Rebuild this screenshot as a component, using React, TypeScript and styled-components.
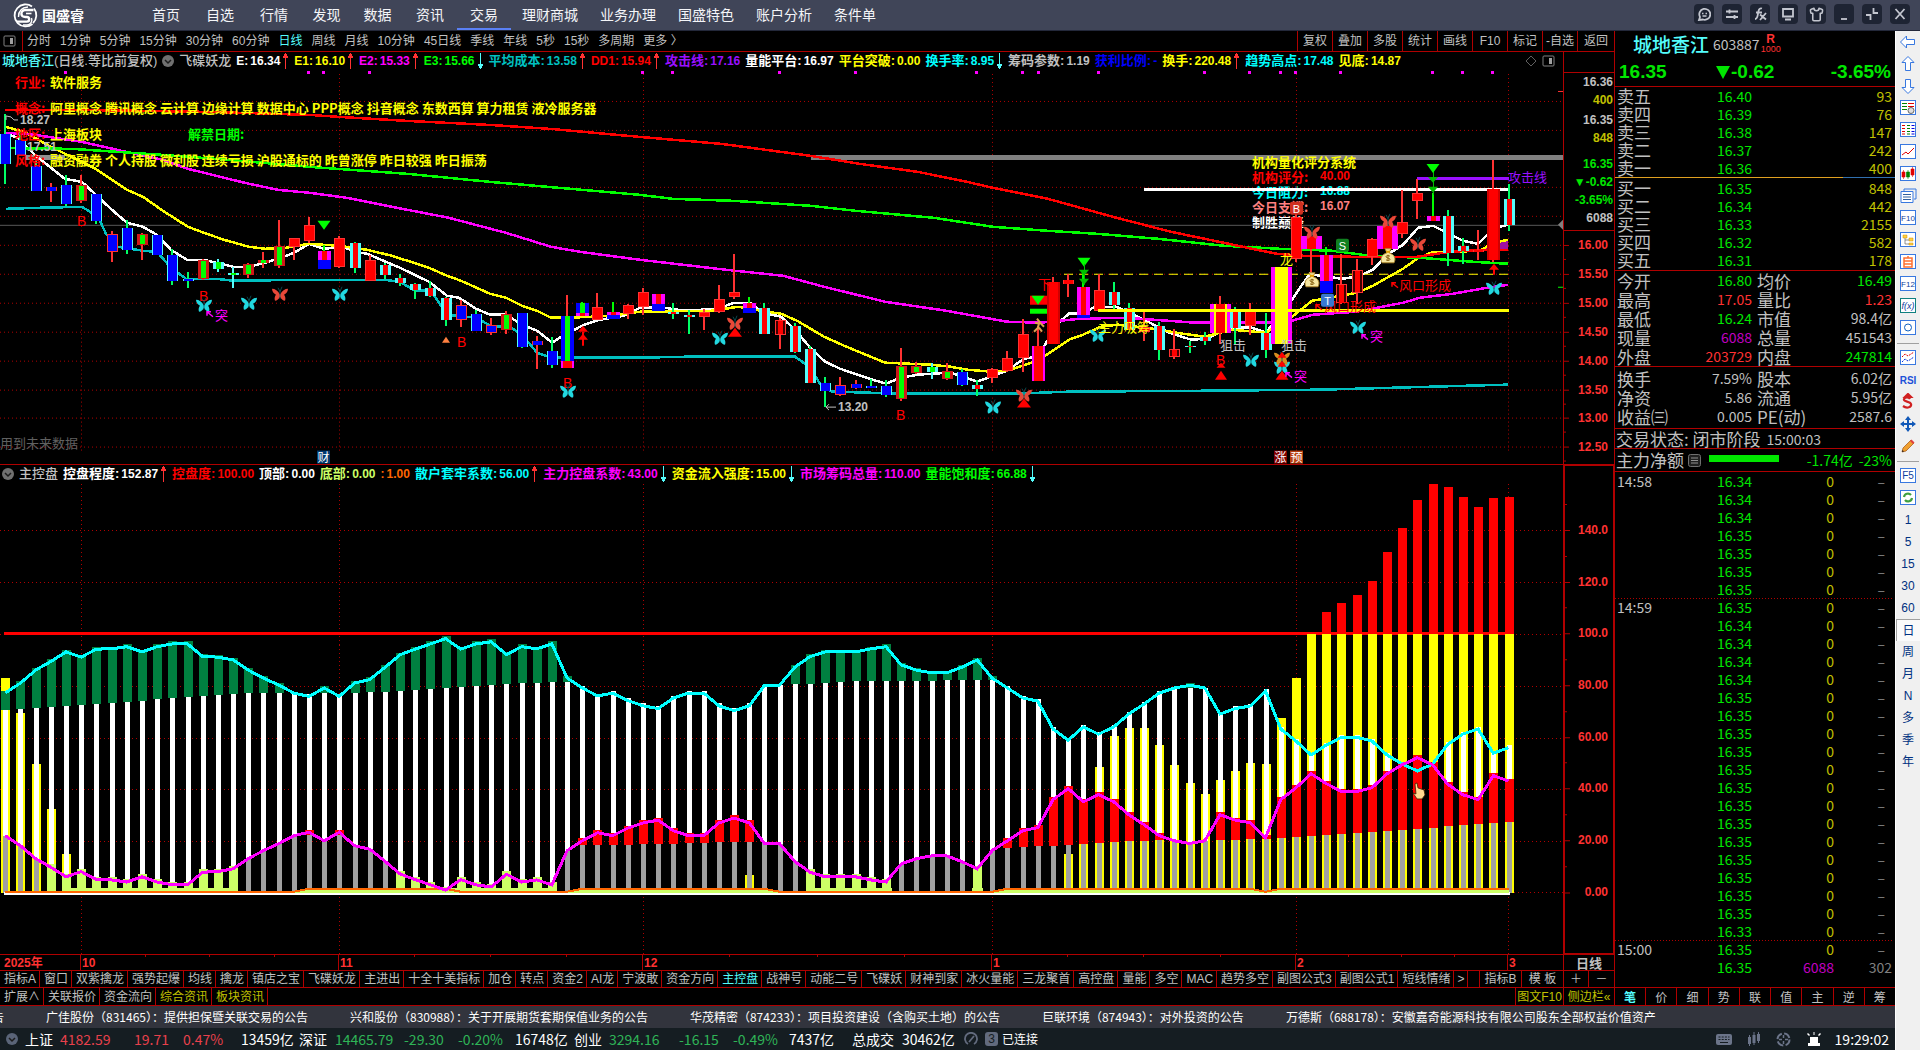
import React from "react";
import styled, { createGlobalStyle, css } from "styled-components";
import { Shirt } from "lucide-react";

const C = {
  line: "#b00000",
  red: "#ff3232",
  pure: "#ff0000",
  green: "#00e600",
  lime: "#00ff00",
  grey: "#c0c0c0",
  olive: "#c0c000",
  yellow: "#ffff00",
  cyan: "#00ffff",
  aqua: "#54fcfc",
  teal: "#00c0c0",
  magenta: "#ff00ff",
  violet: "#9a10ff",
  blue: "#0000ff",
};
const FONT = `"Liberation Sans", "Noto Sans CJK SC", sans-serif`;
const CJK = `"Noto Sans CJK SC", sans-serif`;

const Global = createGlobalStyle`
  * { box-sizing: border-box; }
  body { margin: 0; background: #000; overflow: hidden; }
  button { background: none; border: 0; padding: 0; margin: 0; color: inherit; font: inherit; white-space: nowrap; cursor: pointer; }
  a { color: inherit; text-decoration: none; }
  table { border-collapse: collapse; border-spacing: 0; }
  th, td { padding: 0; font-weight: 400; text-align: left; }
  svg { display: block; }
`;

const Page = styled.div`
  display: flex;
  flex-direction: column;
  height: 100vh;
  background: #000;
  color: ${C.grey};
  font: 12px/16px ${FONT};
  white-space: nowrap;
`;

/* ---------- header ---------- */
const Header = styled.header`
  display: flex;
  align-items: stretch;
  flex: none;
  height: 31px;
  background: #404558;
  border-bottom: 1px solid #23283a;
`;
const Brand = styled.div`
  display: flex;
  align-items: center;
  gap: 4px;
  width: 139px;
  padding-left: 13px;
  color: #fff;
  font: 700 14px/30px ${CJK};
`;
const Nav = styled.nav`
  display: flex;
  flex: 1;
`;
const NavLink = styled.a<{ $w: number; $on?: boolean }>`
  width: ${(p) => p.$w}px;
  text-align: center;
  color: #f4f5f8;
  font: 14px/28px ${CJK};
  border-bottom: 2px solid ${(p) => (p.$on ? "#5a80f5" : "transparent")};
`;
const Tools = styled.div`
  display: flex;
  align-items: center;
  gap: 8px;
  padding: 0 10px 2px 0;
`;
const Tool = styled.button`
  display: grid;
  place-items: center;
  width: 20px;
  height: 20px;
  border-radius: 4px;
  background: #1e2433;
  color: #c3c6cf;
`;

/* ---------- skeleton ---------- */
const Body = styled.div`
  display: flex;
  flex: 1;
  min-height: 0;
`;
const Left = styled.div`
  display: flex;
  flex-direction: column;
  flex: 1;
  min-width: 0;
`;
const Workspace = styled.div`
  display: flex;
  flex: 1;
  min-height: 0;
`;
const Charts = styled.main`
  display: flex;
  flex-direction: column;
  flex: 1;
  min-width: 0;
`;
const Toolbar = styled.div`
  display: flex;
  flex: none;
  height: 21px;
  border-bottom: 1px solid ${C.line};
`;
const PanelToggle = styled.button`
  display: grid;
  place-items: center;
  width: 23px;
  padding-right: 3px;
  border-right: 1px solid ${C.line};
`;
const Periods = styled.div`
  display: flex;
  flex: 1;
  gap: 9px;
  padding-left: 4px;
`;
const Period = styled.button<{ $on?: boolean }>`
  font: 12px/20px ${FONT};
  color: ${(p) => (p.$on ? C.aqua : C.grey)};
`;
const ToolTab = styled.button`
  width: 35px;
  border-left: 1px solid ${C.line};
  font: 12px/20px ${FONT};
  color: ${C.grey};
  &:last-child { width: 37px; }
`;

const Pane = styled.section<{ $grow: number; $ruled?: boolean }>`
  display: flex;
  flex: ${(p) => p.$grow} 1 0;
  min-height: 0;
  ${(p) => p.$ruled && css`border-top: 1px solid ${C.line};`}
`;
const PaneMain = styled.div`
  display: flex;
  flex-direction: column;
  flex: 1;
  min-width: 0;
`;
const Canvas = styled.div`
  position: relative;
  flex: 1;
  min-height: 0;
  overflow: hidden;
`;
const Plot = styled.svg`
  position: relative;
  z-index: 1;
  width: 100%;
  height: 100%;
`;
const AxisCol = styled.div<{ $heavy?: boolean }>`
  display: flex;
  flex-direction: column;
  flex: none;
  width: 51px;
  border-left: ${(p) => (p.$heavy ? 2 : 1)}px solid ${C.line};
  ${(p) => p.$heavy && css`
    border-top: 1px solid ${C.line};
    border-bottom: 1px solid ${C.line};
    border-right: 1px solid ${C.line};
  `}
`;
const AxisBlank = styled.div`
  height: 21px;
  border-bottom: 1px solid ${C.line};
`;
const AxisQuotes = styled.div`
  display: flex;
  flex-direction: column;
  height: 158px;
  padding-right: 1px;
  border-bottom: 1px solid ${C.line};
  text-align: right;
  font: 700 12px/18px ${FONT};
`;
const AxisQuote = styled.span<{ $c: string; $gap?: number }>`
  color: ${(p) => p.$c};
  margin-top: ${(p) => p.$gap || 0}px;
`;
const AxisPlot = styled.svg`
  flex: 1;
  min-height: 0;
  width: 100%;
`;

const Legend = styled.div`
  display: flex;
  align-items: center;
  flex: none;
  height: 18px;
  gap: 5px;
  padding: 0 8px 0 2px;
  font: 700 12px/18px ${FONT};
`;
const LegendItem = styled.span<{ $c: string }>`
  display: flex;
  align-items: center;
  gap: 2px;
  color: ${(p) => p.$c};
`;
const LegendKey = styled.span<{ $latin: boolean }>`
  font: 700 ${(p) => (p.$latin ? 12 : 13)}px/18px ${FONT};
`;
const LegendName = styled.span<{ $c: string }>`
  font: 500 13px/18px ${FONT};
  color: ${(p) => p.$c};
`;
const Push = styled.span`
  flex: 1;
`;
const IconButton = styled.button`
  display: grid;
  place-items: center;
`;
const Info = styled.div`
  position: absolute;
  z-index: 2;
  top: -1px;
  left: 15px;
  display: grid;
  grid-template-columns: 35px auto;
  font: 700 13px/26px ${CJK};
  color: ${C.yellow};
`;
const InfoKey = styled.span`
  color: ${C.pure};
`;
const Unlock = styled.span`
  margin-left: 86px;
  color: ${C.lime};
`;
const Score = styled.div`
  position: absolute;
  top: 84px;
  left: 80.1%;
  display: flex;
  flex-direction: column;
  font: 700 13px/15px ${CJK};
`;
const ScoreRow = styled.span<{ $c: string; $top?: boolean }>`
  display: flex;
  color: ${(p) => p.$c};
  ${(p) => p.$top && css`
    position: relative;
    z-index: 2;
  `}
  span { width: 68px; }
  b { font: 700 12px/15px ${FONT}; }
`;

const DateRow = styled.div`
  display: flex;
  flex: none;
  height: 16px;
  border-top: 1px solid ${C.line};
`;
const DatePlot = styled.svg`
  flex: 1;
  min-width: 0;
  height: 15px;
`;
const DateCell = styled.button`
  width: 51px;
  border-left: 1px solid ${C.line};
  font: 700 13px/15px ${CJK};
  color: ${C.grey};
`;
const TabRow = styled.div<{ $h: number }>`
  display: flex;
  flex: none;
  height: ${(p) => p.$h}px;
  border-top: 1px solid ${C.line};
`;
const Tab = styled.button<{ $c?: string; $w?: number; $edge?: boolean }>`
  flex: none;
  ${(p) => (p.$w ? css`width: ${p.$w}px;` : css`padding: 0 3px 0 4px;`)}
  border-right: 1px solid ${C.line};
  ${(p) => p.$edge && css`border-left: 1px solid ${C.line};`}
  font: 12px/16px ${FONT};
  color: ${(p) => p.$c || C.grey};
  &:last-child { border-right: 0; }
`;
const EndRule = styled.i`
  flex: none;
  height: 1px;
  background: ${C.line};
`;

/* ---------- quote panel ---------- */
const Quote = styled.aside`
  display: flex;
  flex-direction: column;
  flex: none;
  width: 281px;
  border-left: 1px solid ${C.line};
`;
const Title = styled.h1`
  display: flex;
  align-items: center;
  height: 26px;
  margin: 0;
  padding-left: 18px;
  gap: 4px;
  color: ${C.aqua};
  font: 500 19px/26px ${CJK};
`;
const Code = styled.span`
  color: ${C.grey};
  font: 14px/26px ${CJK};
`;
const Margin = styled.span`
  display: flex;
  flex-direction: column;
  align-items: center;
  margin-left: -3px;
  color: ${C.red};
  font: 9px/9px ${FONT};
  b { font: 700 12px/11px ${FONT}; }
`;
const PriceRow = styled.div`
  display: grid;
  grid-template-columns: 96px 1fr auto;
  height: 30px;
  padding: 0 4px;
  border-bottom: 1px solid ${C.line};
  color: ${C.green};
  font: 700 19px/30px ${FONT};
  span { display: flex; align-items: center; }
`;
const Grid = styled.table<{ $rule?: boolean; $row: number; $pad?: number }>`
  display: block;
  flex: none;
  width: 280px;
  padding: ${(p) => p.$pad ?? 0}px 0;
  ${(p) => p.$rule !== false && css`border-bottom: 1px solid ${C.line};`}
  font: 14px/${(p) => p.$row}px ${CJK};
  th, td { height: ${(p) => p.$row}px; }
  th { font: 17px/${(p) => p.$row}px ${CJK}; padding-left: 2px; }
`;
const Cell = styled.td<{ $c?: string; $w: number; $pad?: number }>`
  && { text-align: right; }
  width: ${(p) => p.$w}px;
  min-width: ${(p) => p.$w}px;
  padding-right: ${(p) => p.$pad || 0}px;
  color: ${(p) => p.$c || C.grey};
  overflow: hidden;
`;
const Key = styled.th<{ $w: number }>`
  width: ${(p) => p.$w}px;
  min-width: ${(p) => p.$w}px;
  max-width: ${(p) => p.$w}px;
  overflow: visible;
`;
const Shift = styled.span`
  padding-left: 3px;
`;
const Ratio = styled.div`
  display: grid;
  grid-template-columns: 228fr 52fr;
  height: 1px;
  flex: none;
  i { background: #e0a020; }
  i + i { background: #3070b0; }
`;
const StateRow = styled.div<{ $h: number }>`
  display: flex;
  align-items: center;
  flex: none;
  height: ${(p) => p.$h}px;
  padding: 0 3px 0 1px;
  border-bottom: 1px solid ${C.line};
  font: 17px/18px ${CJK};
`;
const Small = styled.span<{ $c?: string }>`
  font: 14px/18px ${CJK};
  color: ${(p) => p.$c || C.grey};
  margin-left: 6px;
`;
const NetBar = styled.i`
  width: 70px;
  height: 7px;
  margin: 0 auto 4px 8px;
  background: ${C.green};
`;
const Ticks = styled.table`
  display: block;
  flex: 1;
  width: 280px;
  font: 14px/18px ${CJK};
  th, td { height: 18px; }
  th { font: 14px/18px ${CJK}; padding-left: 2px; }
`;
const TickRow = styled.tr<{ $start?: boolean }>`
  ${(p) => p.$start && css`
    background: repeating-linear-gradient(90deg, ${C.line} 0 1px, transparent 1px 3px) 0 0 / 100% 1px no-repeat;
  `}
`;
const QuoteTabs = styled.div`
  display: flex;
  flex: none;
  height: 19px;
  border-top: 1px solid ${C.line};
  border-bottom: 1px solid ${C.line};
`;
const QuoteTab = styled.button<{ $on?: boolean }>`
  flex: 1;
  border-right: 1px solid ${C.line};
  font: ${(p) => (p.$on ? 700 : 400)} 12px/17px ${CJK};
  color: ${(p) => (p.$on ? C.aqua : C.grey)};
  &:last-child { border-right: 0; }
`;

/* ---------- foot ---------- */
const Ticker = styled.div`
  display: flex;
  flex: none;
  gap: 42px;
  height: 22px;
  overflow: hidden;
  background: #32343d;
  color: #fff;
  font: 12px/22px ${CJK};
`;
const TickerTail = styled.span`
  width: 4px;
  direction: rtl;
`;
const Status = styled.footer`
  display: flex;
  align-items: center;
  flex: none;
  height: 22px;
  padding: 0 4px 0 6px;
  background: #151d22;
  color: #fff;
  font: 14px/22px ${CJK};
`;
const Stat = styled.span<{ $c?: string; $w: number }>`
  width: ${(p) => p.$w}px;
  color: ${(p) => p.$c || "#fff"};
`;
const Badge = styled.span`
  width: 13px;
  margin: 0 4px 0 7px;
  border-radius: 3px;
  background: #626b7e;
  color: #151d22;
  text-align: center;
  font: 12px/14px ${FONT};
`;
const Linked = styled.span`
  flex: 1;
  font: 12px/22px ${CJK};
`;
const StatusIcons = styled.div`
  display: flex;
  align-items: center;
  gap: 16px;
  margin-right: 14px;
  color: #6b7489;
`;
const Clock = styled.time`
  padding-right: 2px;
`;

/* ---------- side strip ---------- */
const Strip = styled.nav`
  display: flex;
  flex-direction: column;
  flex: none;
  width: 25px;
  border-left: 1px solid #fff;
  background: #f0f0f0;
`;
const StripButton = styled.button<{ $on?: boolean }>`
  display: grid;
  place-items: center;
  height: 22px;
  color: #003080;
  font: 12px/20px ${FONT};
  ${(p) => p.$on && css`
    background: #fafafa;
    border-left: 1px solid #a0a0a0;
    border-top: 1px solid #a0a0a0;
  `}
`;
const StripRule = styled.i`
  height: 1px;
  margin: 4px 1px 3px;
  background: #a0a0a0;
`;

/* ---------- data ---------- */
const nav: [string, number][] = [
  ["首页", 54], ["自选", 54], ["行情", 54], ["发现", 51], ["数据", 51], ["资讯", 54], ["交易", 54],
  ["理财商城", 78], ["业务办理", 78], ["国盛特色", 78], ["账户分析", 78], ["条件单", 64],
];
const periods = ["分时", "1分钟", "5分钟", "15分钟", "30分钟", "60分钟", "日线", "周线", "月线", "10分钟", "45日线", "季线", "年线", "5秒", "15秒", "多周期", "更多 〉"];
const toolTabs = ["复权", "叠加", "多股", "统计", "画线", "F10", "标记", "-自选", "返回"];

type Leg = [string, string, string, ("up" | "down")?];
const mainLegend: Leg[] = [
  ["E:", "16.34", "#fff", "up"], ["E1:", "16.10", C.yellow, "up"], ["E2:", "15.33", C.magenta, "up"],
  ["E3:", "15.66", C.lime, "down"], ["平均成本:", "13.58", C.teal, "up"], ["DD1:", "15.94", C.pure, "up"],
  ["攻击线:", "17.16", C.violet], ["量能平台:", "16.97", "#fff"], ["平台突破:", "0.00", C.yellow],
  ["换手率:", "8.95", C.cyan, "down"], ["筹码参数:", "1.19", C.grey], ["获利比例:", "-", C.blue],
  ["换手:", "220.48", C.yellow, "up"], ["趋势高点:", "17.48", C.cyan], ["见底:", "14.87", C.yellow],
];
const subLegend: Leg[] = [
  ["控盘程度:", "152.87", "#fff", "up"], ["控盘度:", "100.00", C.pure], ["顶部:", "0.00", "#fff"],
  ["底部:", "0.00", "#ccff66"], [":", "1.00", "#ff6600"], ["散户套牢系数:", "56.00", C.cyan, "up"],
  ["主力控盘系数:", "43.00", C.magenta, "down"], ["资金流入强度:", "15.00", C.yellow, "down"],
  ["市场筹码总量:", "110.00", C.magenta], ["量能饱和度:", "66.88", C.lime, "down"],
];
const indicatorTabs = ["指标A", "窗口", "双紫擒龙", "强势起爆", "均线", "擒龙", "镇店之宝", "飞碟妖龙", "主进出", "十全十美指标", "加仓", "转点", "资金2", "AI龙", "宁波敢", "资金方向", "主控盘", "战神号", "动能二号", "飞碟妖", "财神到家", "冰火量能", "三龙聚首", "高控盘", "量能", "多空", "MAC", "趋势多空", "副图公式3", "副图公式1", "短线情绪"];
const asks = [["卖五", "16.40", "93"], ["卖四", "16.39", "76"], ["卖三", "16.38", "147"], ["卖二", "16.37", "242"], ["卖一", "16.36", "400"]];
const bids = [["买一", "16.35", "848"], ["买二", "16.34", "442"], ["买三", "16.33", "2155"], ["买四", "16.32", "582"], ["买五", "16.31", "178"]];
const facts = [
  ["今开", "16.80", C.green, "均价", "16.49", C.green],
  ["最高", "17.05", C.red, "量比", "1.23", C.red],
  ["最低", "16.24", C.green, "市值", "98.4亿", C.grey],
  ["现量", "6088", "#c000c0", "总量", "451543", C.grey],
  ["外盘", "203729", C.red, "内盘", "247814", C.green],
];
const facts2 = [
  ["换手", "7.59%", C.grey, "股本", "6.02亿", C.grey],
  ["净资", "5.86", C.grey, "流通", "5.95亿", C.grey],
  ["收益㈢", "0.005", C.grey, "PE(动)", "2587.6", C.grey],
];
const tickPrices = [34, 34, 34, 35, 35, 35, 35, 35, 34, 34, 34, 34, ...Array(13).fill(35), 33, 35, 35];
const tickTimes: Record<number, string> = { 0: "14:58", 7: "14:59", 26: "15:00" };
const news = [
  "广佳股份（831465）：提供担保暨关联交易的公告",
  "兴和股份（830988）：关于开展期货套期保值业务的公告",
  "华茂精密（874233）：项目投资建设（含购买土地）的公告",
  "巨联环境（874943）：对外投资的公告",
  "万德斯（688178）：安徽嘉奇能源科技有限公司股东全部权益价值资产",
];
const up = "#e8414c";
const dn = "#2fb457";
const indices: [string, number, string?][] = [
  ["上证", 35], ["4182.59", 74, up], ["19.71", 49, up], ["0.47%", 58, up], ["13459亿", 58],
  ["深证", 36], ["14465.79", 69, dn], ["-29.30", 54, dn], ["-0.20%", 57, dn], ["16748亿", 59],
  ["创业", 35], ["3294.16", 70, dn], ["-16.15", 54, dn], ["-0.49%", 56, dn], ["7437亿", 63],
  ["总成交", 50], ["30462亿", 62],
];

/* ---------- chart series ---------- */
const barX = (i: number) => 5.3 + 15.184 * i;
const months: [number, string][] = [[81, "10"], [339, "11"], [643, "12"], [992, "1"], [1296, "2"], [1508, "3"]];

const retail = [
  77.2, 81.1, 86.1, 89.4, 93.1, 91.1, 94.2, 94.3, 95.1, 93.1, 95.1, 96.2, 96.2, 91.3, 91.1, 90, 86.1, 83, 80.3, 77.2,
  75.9, 79.2, 75.9, 81.1, 82.4, 87.1, 92, 94.2, 96.2, 98.2, 94.2, 96.2, 97, 92.1, 95.1, 94.3, 96.2, 83, 79.2, 76.1,
  77.2, 74.3, 72.3, 71.2, 75.3, 77.2, 77.2, 72.3, 70.4, 72.3, 80.2, 80.3, 87.2, 91.3, 93.1, 93.1, 93.1, 94.3, 95.1, 88.1,
  86.1, 85, 85, 87.2, 90, 82.9, 79.2, 75.3, 74.1, 63.3, 59, 64.1, 61.3, 64.1, 69.1, 73, 77.2, 79.2, 80.2, 79.2,
  69.1, 71.2, 72.2, 78, 63.3, 58.7, 53.3, 57.1, 60.1, 60.1, 58.7, 53.3, 49.8, 47.1, 49.8, 57.4, 61.4, 63.3, 54, 56.1,
];
const control: Record<number, number> = {
  0: 83.2, 1: 69.6, 2: 49.8, 3: 32.4, 4: 15, 49: 6.8, 70: 15, 71: 33, 72: 48.7, 73: 60.7, 74: 63.8, 75: 63.8, 76: 57.2,
  77: 49.5, 78: 42.5, 79: 38.2, 80: 43.6, 81: 47.1, 82: 50.2, 83: 49.8, 84: 67.6, 85: 83, 86: 100, 87: 108.3, 88: 111.8,
  89: 115, 90: 120.4, 91: 131.5, 92: 140.9, 93: 151.8, 94: 158, 95: 156.8, 96: 152.9, 97: 149, 98: 152.5, 99: 152.9,
};
const thresholdPts = [[0, 70.9], [7, 73.6], [15, 77], [17, 77.4], [23, 77.5], [25, 77.9], [29, 79.2], [32, 80.5], [36, 81.6], [38, 81.3], [43, 80.9], [48, 80], [50, 80.2], [53, 81], [56, 82], [66, 82.4], [70, 81.2], [73, 80], [76, 79.5], [83, 79], [85, 78.3], [91, 76], [95, 74], [99, 72.4]];
const threshold = (i: number) => {
  const k = Math.max(1, thresholdPts.findIndex((p) => p[0] >= i));
  const [x0, y0] = thresholdPts[k - 1];
  const [x1, y1] = thresholdPts[k];
  return y0 + ((y1 - y0) * (i - x0)) / (x1 - x0);
};
const lowBase = (i: number) => i < 20 || (i > 29 && i < 38) || (i > 50 && i < 66) || i === 83;

/* kind, index, high, low, body top, body bottom */
type Candle = [string, number, number, number, number, number];
const candles: Candle[] = [
  ["b", 0, 114, 184, 134, 164], ["b", 1, 132, 155, 140, 155], ["b", 2, 160, 191, 166, 191], ["rb", 3, 183, 202, 187, 191],
  ["b", 4, 175, 206, 185, 204], ["rg", 5, 175, 203, 185, 201], ["b", 6, 194, 224, 194, 221], ["rb", 7, 231, 262, 234, 252],
  ["b", 8, 220, 254, 228, 250], ["rg", 9, 233, 260, 234, 245], ["b", 10, 235, 255, 235, 255], ["b", 11, 249, 285, 255, 281],
  ["b", 12, 272, 288, 279, 281], ["rg", 13, 259, 280, 260, 279], ["cg", 14, 259, 272, 262, 269], ["cg", 15, 267, 288, 273, 275],
  ["rg", 16, 263, 278, 264, 275], ["rg", 17, 252, 268, 260, 263], ["rg", 18, 220, 268, 246, 266], ["r", 19, 238, 260, 238, 247],
  ["r", 20, 217, 243, 225, 241], ["m", 21, 245, 269, 251, 260], ["mb", 21, 260, 268, 260, 269], ["r", 22, 236, 268, 238, 267],
  ["c", 23, 242, 273, 243, 268], ["r", 24, 255, 281, 260, 281], ["c", 25, 263, 279, 265, 275], ["c", 26, 274, 286, 278, 283],
  ["c", 27, 283, 299, 284, 290], ["c", 28, 281, 297, 288, 296], ["c", 29, 297, 326, 298, 320], ["rb", 30, 300, 327, 305, 320],
  ["b", 31, 310, 331, 314, 331], ["rb", 32, 318, 335, 325, 333], ["rg", 33, 311, 334, 314, 330], ["b", 34, 313, 348, 313, 347],
  ["rb", 35, 336, 369, 341, 345], ["b", 36, 337, 368, 351, 365], ["B", 37, 295, 361, 316, 361], ["M", 37, 361, 368, 361, 368],
  ["bg", 38, 302, 313, 303, 313], ["m", 38, 313, 316, 313, 316], ["r", 39, 293, 320, 307, 320], ["m", 40, 302, 315, 312, 315],
  ["mb", 40, 315, 319, 315, 319], ["r", 41, 304, 319, 305, 314], ["r", 42, 288, 315, 292, 307], ["m", 43, 294, 304, 294, 304],
  ["mb", 43, 304, 311, 304, 311], ["c", 44, 303, 319, 312, 314], ["c", 45, 310, 334, 315, 317], ["r", 46, 309, 330, 312, 317],
  ["r", 47, 285, 313, 299, 312], ["r", 48, 254, 299, 292, 297], ["m", 49, 297, 308, 303, 308], ["mb", 49, 308, 313, 308, 313],
  ["c", 50, 303, 334, 308, 334], ["d", 51, 318, 349, 320, 335], ["c", 52, 323, 353, 326, 352], ["c", 53, 346, 383, 349, 383],
  ["b", 54, 377, 407, 383, 391], ["rb", 55, 377, 396, 385, 395], ["rb", 56, 380, 389, 384, 388], ["b", 57, 379, 388, 386, 388],
  ["b", 58, 380, 397, 386, 395], ["rg", 59, 348, 401, 366, 399], ["rg", 60, 362, 374, 366, 373], ["cg", 61, 363, 379, 367, 372],
  ["rg", 62, 363, 380, 371, 379], ["b", 63, 369, 386, 372, 385], ["c", 64, 380, 396, 385, 389], ["r", 65, 368, 383, 369, 378],
  ["r", 66, 351, 372, 358, 371], ["r", 67, 319, 372, 334, 358], ["M", 68, 326, 381, 346, 381], ["R", 69, 277, 344, 282, 344],
  ["r", 70, 274, 297, 280, 284], ["m", 71, 270, 315, 287, 315], ["mb", 71, 315, 318, 315, 318], ["r", 72, 274, 311, 290, 311],
  ["c", 73, 282, 309, 292, 305], ["c", 74, 303, 330, 308, 330], ["r", 75, 312, 341, 327, 332], ["c", 76, 322, 360, 326, 350],
  ["d", 77, 329, 359, 349, 357], ["c", 78, 341, 353, 346, 347], ["c", 79, 332, 345, 337, 341], ["W", 80, 296, 344, 304, 333],
  ["c", 81, 307, 344, 311, 328], ["r", 82, 303, 335, 311, 326], ["c", 83, 313, 358, 333, 350], ["Y", 84, 267, 344, 267, 344],
  ["r", 85, 210, 262, 217, 259], ["V", 86, 232, 273, 236, 249], ["m", 87, 247, 281, 255, 281], ["mb", 87, 281, 293, 281, 293],
  ["d", 88, 254, 304, 284, 303], ["d", 89, 259, 304, 270, 293], ["r", 90, 238, 265, 239, 257], ["V", 91, 222, 252, 226, 249],
  ["r", 92, 190, 238, 222, 234], ["r", 93, 179, 219, 193, 201], ["m", 94, 193, 221, 216, 221], ["c", 95, 210, 266, 216, 253],
  ["c", 96, 238, 264, 246, 251], ["r", 97, 230, 260, 250, 252], ["R", 98, 160, 262, 189, 260], ["c", 99, 184, 231, 199, 225],
];
/* outer width, outer colour, inner width, inner colour, wick */
const kinds: Record<string, [number, string, number, string, string]> = {
  b: [11, C.aqua, 9, C.blue, "#00ff66"], rb: [11, C.red, 9, C.blue, C.red], rg: [11, "#d01818", 5, C.lime, C.red],
  bg: [13, C.blue, 5, C.lime, C.lime], cg: [11, C.aqua, 5, C.lime, C.aqua], r: [11, C.red, 9, C.pure, C.red],
  R: [13, "#d00000", 9, C.pure, C.red], d: [11, C.red, 5, C.pure, C.red], c: [11, C.aqua, 5, C.pure, "#00ff66"],
  m: [13, C.magenta, 5, C.pure, C.lime], mb: [13, C.blue, 3, C.blue, C.lime], B: [13, C.blue, 5, C.lime, C.red],
  M: [13, C.magenta, 9, C.pure, C.red], W: [21, C.magenta, 13, C.yellow, C.red], Y: [21, C.magenta, 13, C.yellow, C.yellow],
  V: [21, C.magenta, 9, C.pure, C.red],
};

const lines = {
  red: "5,110 82,110 212,112 310,115 340,117 408,121 490,125 551,129 640,137 722,144 811,156 860,164 918,172 967,182 993,188 1048,199 1113,217 1171,232 1224,243 1252,249 1277,254 1303,256 1353,257 1417,257 1450,252 1487,250 1508,250",
  green: "0,148 73,149 163,155 229,160 310,167 408,174 490,182 571,189 640,195 673,199 734,201 811,206 856,211 934,218 993,227 1048,231 1097,234 1158,239 1224,246 1280,249 1333,251 1370,256 1420,258 1473,262 1508,264",
  magenta: "6,133 29,134 82,142 122,151 163,160 188,169 245,183 278,190 310,193 347,198 392,207 449,218 506,233 551,247 580,252 640,260 726,270 783,276 824,287 885,302 946,311 1007,322 1040,323 1081,319 1126,318 1195,323 1265,323 1292,321 1313,315 1357,312 1377,308 1403,303 1420,298 1453,294 1487,288 1508,285",
  yellow: "6,127 24,132 53,148 94,168 127,190 143,197 163,211 188,227 204,233 224,240 249,247 265,249 286,248 309,244 339,246 367,250 392,256 429,268 447,276 461,281 490,294 506,298 522,306 537,311 551,318 571,318 612,316 640,312 713,311 738,307 767,312 781,314 797,321 824,337 844,346 885,363 930,365 950,367 967,370 991,372 1007,371 1032,363 1044,357 1069,340 1083,335 1101,327 1118,325 1146,328 1183,334 1205,337 1232,330 1266,333 1292,317 1312,301 1330,298 1357,293 1373,286 1387,278 1403,269 1417,259 1433,252 1453,252 1480,251 1493,243 1508,240",
  white: "6,134 18,138 35,155 51,168 65,179 82,182 98,197 112,210 127,223 143,227 157,235 171,250 187,260 204,260 233,267 249,267 265,263 278,259 294,253 309,244 324,249 343,247 355,252 367,254 400,268 429,282 447,296 459,298 476,309 490,315 506,315 522,325 537,331 552,343 563,336 584,325 600,320 624,316 640,308 664,308 685,311 718,309 734,303 752,304 762,313 781,317 795,330 811,349 825,362 840,369 869,379 886,384 901,378 918,375 950,373 962,377 977,382 991,377 1007,371 1024,359 1038,357 1048,340 1056,325 1069,314 1083,314 1093,308 1116,307 1130,313 1146,321 1167,332 1191,340 1207,339 1220,332 1232,328 1252,328 1266,333 1292,300 1302,285 1310,274 1320,276 1342,279 1357,277 1373,270 1387,255 1403,245 1418,228 1433,226 1447,233 1463,241 1478,244 1487,235 1500,227 1508,225",
  teal: "6,209 37,208 82,207 98,217 106,234 118,247 143,251 157,252 171,268 186,279 216,279 233,281 309,280 384,280 400,282 415,291 431,291 447,315 476,318 492,327 510,327 522,335 537,353 551,358 640,358 689,357 795,357 809,367 822,387 832,392 901,394 1016,394 1069,392 1220,391 1323,390 1508,385",
};

/* ---------- drawings ---------- */
const Arrow = ({ dir }: { dir: "up" | "down" }) => (
  <svg width="7" height="16" viewBox="0 0 7 16" shapeRendering="crispEdges" aria-hidden>
    {dir === "up" ? <path d="M3 0h1v1h1v2h1v2H4v11H3V5H1V3h1V1h1z" fill={C.red} /> : <path d="M3 0h1v11h2v2H5v2H4v1H3v-1H2v-2H1v-2h2z" fill={C.aqua} />}
  </svg>
);
const Drop = ({ bg = "#707070" }: { bg?: string }) => (
  <svg width="12" height="14" viewBox="0 0 12 14" aria-hidden>
    <circle cx="6" cy="7" r="6" fill={bg} />
    <path d="M3 6l3 3 3-3" fill="none" stroke="#1c1c1c" strokeWidth="1.5" />
  </svg>
);
const PanelIcon = () => (
  <svg width="13" height="12" viewBox="0 0 13 12" aria-hidden>
    <rect x="1" y="1" width="11" height="10" rx="1" fill="none" stroke="#808080" />
    <rect x="7" y="3" width="3" height="6" fill="#a0a0a0" />
  </svg>
);
const Logo = () => (
  <svg width="25" height="25" viewBox="0 0 25 25" aria-hidden>
    <g fill="none" stroke="#fff" strokeWidth="2.400">
      <path d="M19 3.500A11 11 0 1 0 19.500 21" strokeWidth="1.800" />
      <path d="M21 5.500A10.800 10.800 0 0 1 20 20" strokeWidth="1.800" />
      <path d="M20.500 7H12a3.800 3.800 0 0 0-3.600 4c.2 2.400 2 3 4 3h1.500a2.300 2.300 0 0 1 0 4.600H4" />
      <path d="M18.500 10.500h-5.500" strokeWidth="1.600" />
      <path d="M5.500 14C5.500 8 9 4.500 15 4" strokeWidth="1.400" />
      <path d="M10 22h4a5 5 0 0 0 4.500-7" strokeWidth="1.400" />
    </g>
  </svg>
);
const Butterfly = ({ x, y, c = "#22d8e0" }: { x: number; y: number; c?: string }) => (
  <g transform={`translate(${x} ${y})`} fill={c}>
    <path d="M0 1C-2-3-5-5-8-5c0 3 2 5 4 6-1 1-2 4-1 6 2 0 4-2 5-4 1 2 3 4 5 4 1-2 0-5-1-6 2-1 4-3 4-6-3 0-6 2-8 6z" />
    <path d="M0 5V-2L-2-6M0-2l2-5" stroke="#0b5a60" fill="none" strokeWidth=".8" />
  </g>
);
const Candlestick = ({ c }: { c: Candle }) => {
  const [ow, oc, iw, ic, wick] = kinds[c[0]];
  const x = Math.round(barX(c[1]));
  const h = c[5] - c[4];
  const outlined = ["r", "rb", "rg", "d"].includes(c[0]);
  const inset = outlined && h > 4 ? 1 : 0;
  return (
    <g>
      <rect x={x - 1} y={c[2]} width={2} height={c[3] - c[2]} fill={wick} />
      <rect x={x - (ow - 1) / 2} y={c[4]} width={ow} height={h} fill={oc} />
      {c[0] === "d" && <rect x={x - 4} y={c[4] + 1} width={9} height={h - 2} fill="#400000" />}
      <rect x={x - (iw - 1) / 2} y={c[4] + inset} width={iw} height={h - inset * 2} fill={ic} />
      {c[0] === "W" && <rect x={x - 4} y={c[4]} width={9} height={h} fill={C.pure} />}
    </g>
  );
};
const Tri = ({ x, y, w = 14, h = 9, c = C.pure, down }: { x: number; y: number; w?: number; h?: number; c?: string; down?: boolean }) => (
  <path d={down ? `M${x - w / 2} ${y}h${w}l${-w / 2} ${h}z` : `M${x - w / 2} ${y + h}h${w}l${-w / 2} ${-h}z`} fill={c} />
);
const Mark = ({ x, y, t, c, s = 13, w = 400 }: { x: number; y: number; t: string; c: string; s?: number; w?: number }) => (
  <text x={x} y={y + 5} fill={c} fontSize={s} fontWeight={w} fontFamily={FONT}>{t}</text>
);
const Chip = ({ x, y, t, bg, s = 12 }: { x: number; y: number; t: string; bg: string; s?: number }) => (
  <g>
    <rect x={x} y={y} width="13" height="13" rx={s < 12 ? 2 : 0} fill={bg} />
    <text x={x + 6.5} y={y + 11} fill="#fff" fontSize={s} textAnchor="middle" fontFamily={FONT}>{t}</text>
  </g>
);
const Burst = ({ x, y, c = C.magenta }: { x: number; y: number; c?: string }) => (
  <path d={`M${x} ${y}l-6 -5m0 4v-4h4`} stroke={c} strokeWidth="1.500" fill="none" />
);
const Bag = ({ x, y }: { x: number; y: number }) => (
  <g transform={`translate(${x} ${y})`}>
    <path d="M-3-7h6L1-3c6 2 7 6 5 10h-12c-2-4-1-8 5-10z" fill="#f6e7a0" stroke="#b08a30" />
    <path d="M-2-4h4" stroke="#e0a000" strokeWidth="2" />
    <path d="M2 .500c-1-1-4-1-4 .5s4 1 4 2.500-3 1.500-4 .5M0-1v6" fill="none" stroke="#7a5200" strokeWidth=".9" />
  </g>
);

const gridY = [101, 130, 187, 216, 245, 274, 303, 332, 361, 390, 418, 447];
const dots = { stroke: C.line, strokeDasharray: "1 3", fill: "none" };

const MainPlot = () => (
  <Plot viewBox="0 70 1563 394" preserveAspectRatio="none" shapeRendering="crispEdges" role="img" aria-label="日线K线图">
    {gridY.map((y) => <path key={y} d={`M0 ${y}.5H1563`} {...dots} />)}
    {months.map(([x]) => <path key={x} d={`M${x}.5 74V451`} {...dots} />)}
    <path d="M0 225.500H180M1146 225.500H1563" stroke="#585858" />
    <rect x="811" y="155" width="752" height="5" fill="#808080" />
    <rect x="25" y="155" width="40" height="5" fill="#909090" />
    {[65, 308, 323, 369, 642, 672, 779, 855, 976, 1022, 1038, 1098, 1204, 1249, 1280, 1295, 1340, 1432, 1462, 1492].map((x) => (
      <rect key={x} x={x - 1} y="71" width="3" height="3" fill={C.magenta} />
    ))}
    <path d="M1475 252L1493 243 1508 240V250z" fill="#a010a0" />
    <g fill="none" strokeWidth="2.5">
      <polyline points={lines.teal} stroke={C.teal} />
      <polyline points={lines.white} stroke="#fff" />
      <polyline points={lines.yellow} stroke={C.yellow} />
      <polyline points={lines.magenta} stroke={C.magenta} />
      <polyline points={lines.green} stroke={C.lime} />
      <polyline points={lines.red} stroke={C.pure} />
    </g>
    <path d="M1064 274.500H1513" stroke={C.yellow} strokeDasharray="9 6" />
    <path d="M1144 189.500H1509" stroke="#fff" strokeWidth="3" />
    <path d="M1417 178.500H1509" stroke={C.violet} strokeWidth="3" />
    {candles.map((c, k) => <Candlestick key={k} c={c} />)}
    <path d="M1098 310.500H1509" stroke={C.yellow} strokeWidth="3" />
    <g shapeRendering="auto">
      <Mark x={20} y={119} t="18.27" c={C.grey} s={12} w={700} />
      <path d="M6 116l5 1 3 3h4M6 116v4" stroke={C.grey} fill="none" />
      <Mark x={27} y={146} t="17.51" c={C.grey} s={12} w={700} />
      <Mark x={838} y={406} t="13.20" c={C.grey} s={12} w={700} />
      <path d="M836 407.500H826l3-3M826 407.500l3 3" stroke={C.grey} fill="none" />
      {[[82, 221], [204, 296], [462, 342], [568, 383], [901, 415], [1221, 360]].map(([x, y]) => (
        <Mark key={x} x={x - 5} y={y} t="B" c={C.pure} s={14} />
      ))}
      {[[204, 305], [249, 303], [340, 294], [568, 391], [720, 338], [993, 407], [1098, 335], [1251, 360], [1282, 367], [1358, 327], [1494, 288]].map(([x, y]) => (
        <Butterfly key={x} x={x} y={y} />
      ))}
      {[[280, 294], [735, 323], [1024, 395], [1312, 232], [1388, 221], [1418, 244]].map(([x, y]) => (
        <Butterfly key={x} x={x} y={y} c="#e84838" />
      ))}
      <Butterfly x={1282} y={358} c="#d89020" />
      <Tri x={735} y={328} /><Tri x={1024} y={399} /><Tri x={1221} y={371} w={12} /><Tri x={1282} y={371} w={13} />
      <Tri x={1282} y={352} w={9} h={6} /><Tri x={1282} y={361} w={9} h={6} /><Tri x={1221} y={363} w={9} h={5} />
      <Tri x={583} y={326} w={10} h={6} /><Tri x={583} y={334} w={10} h={6} /><path d="M583 332V346" stroke={C.pure} strokeWidth="2" />
      <Tri x={1494} y={264} w={10} h={6} /><path d="M1494 268V275" stroke={C.pure} strokeWidth="2" />
      <Tri x={446} y={337} w={8} h={6} c="#ff8040" />
      <Tri x={324} y={221} w={13} h={9} c={C.lime} down />
      <rect x="1030" y="296" width="17" height="9" fill={C.pure} />
      <Tri x={1038} y={296} w={13} h={9} c={C.lime} down />
      <rect x="1030" y="309" width="17" height="5" fill={C.lime} />
      <Tri x={1084} y={258} w={13} h={9} c={C.lime} down /><Tri x={1084} y={270} w={10} h={6} c="#00c000" down /><Tri x={1084} y={279} w={10} h={6} c="#00c000" down />
      <path d="M1084.500 264V285M1433.500 170V195" stroke="#00c000" />
      <Tri x={1433} y={164} w={13} h={9} c={C.lime} down /><Tri x={1433} y={177} w={10} h={6} c="#00c000" down /><Tri x={1433} y={187} w={10} h={6} c="#00c000" down />
      <path d="M1037 319l3 4 4 4m-5-4l-1 5-4 4m5-4l3 4m-7-9l5 1" stroke="#e0a050" strokeWidth="2" fill="none" />
      <Mark x={1038} y={284} t="下" c={C.pure} />
      <Mark x={1098} y={327} t="主力吸筹" c={C.yellow} />
      <Mark x={1220} y={345} t="狙击" c={C.grey} /><Mark x={1281} y={345} t="狙击" c={C.grey} />
      <Mark x={1280} y={259} t="龙" c={C.yellow} />
      <Mark x={215} y={315} t="突" c={C.magenta} /><Burst x={213} y={317} />
      <Mark x={1370} y={336} t="突" c={C.magenta} /><Burst x={1368} y={340} />
      <Mark x={1294} y={376} t="突" c={C.magenta} /><Burst x={1292} y={378} />
      <Mark x={1399} y={285} t="风口形成" c={C.pure} /><Burst x={1398} y={288} c={C.pure} />
      <Mark x={1324} y={306} t="风口形成" c={C.pure} /><Burst x={1322} y={310} c={C.pure} />
      <Mark x={1508} y={177} t="攻击线" c={C.violet} />
      <Bag x={1312} y={280} /><Bag x={1388} y={256} />
      <Chip x={1290} y={202} t="B" bg="#d03020" s={11} /><Chip x={1336} y={239} t="S" bg="#108020" s={11} /><Chip x={1321} y={294} t="T" bg="#3878d0" s={11} />
      <Chip x={317} y={451} t="财" bg="#003a70" /><Chip x={1274} y={451} t="涨" bg="#800000" /><Chip x={1290} y={451} t="预" bg="#b84010" />
      <Mark x={0} y={443} t="用到未来数据" c="#606060" />
      <path d="M1563 220v10l-5-5z" fill="#808080" />
    </g>
    <path d="M1558 91.500H1563" stroke={C.red} /><path d="M1558 287.500H1563" stroke={C.lime} />
  </Plot>
);

const V = (v: number) => 891.6 - v * 2.58;
const Bar = ({ i, a, b, w, c }: { i: number; a: number; b: number; w: number; c: string }) => (
  <rect x={Math.round(barX(i)) - (w - 1) / 2} y={Math.round(V(b))} width={w} height={Math.max(0, Math.round(V(a)) - Math.round(V(b)))} fill={c} />
);
const ControlPlot = () => {
  const base = retail.map((_, i) => `${barX(i).toFixed(1)},${lowBase(i) ? 890.5 : 887.5}`).join(" ");
  return (
    <Plot viewBox="0 483 1563 470" preserveAspectRatio="none" shapeRendering="crispEdges" role="img" aria-label="主控盘指标图">
      {[140, 120, 100, 80, 60, 40, 20].map((v) => <path key={v} d={`M0 ${Math.round(V(v))}.5H1563`} {...dots} />)}
      <path d="M1510 891.500H1563" {...dots} />
      {months.map(([x]) => <path key={x} d={`M${x}.5 484V953`} {...dots} />)}
      <path d="M4 633.500H1509" stroke={C.pure} strokeWidth="3" />
      {retail.map((r, i) => {
        const m = 99.3 - r;
        const t = threshold(i);
        const cap = 99.7 - t;
        const k = control[i] || 0;
        return (
          <g key={i}>
            {k > 0 && <Bar i={i} a={0} b={Math.min(k, 100)} w={9} c={C.yellow} />}
            {k > 100 && <Bar i={i} a={100} b={k} w={9} c={C.pure} />}
            {r > t && <Bar i={i} a={t} b={r + 1} w={9} c="#008040" />}
            {r > m && <Bar i={i} a={m} b={Math.min(r + 1, t)} w={5} c="#fff" />}
            <Bar i={i} a={0} b={Math.min(m, cap)} w={5} c="#a0a0a0" />
            {m > cap && <Bar i={i} a={cap} b={m + 1} w={9} c={C.pure} />}
            {m < 10 && <Bar i={i} a={0} b={m + 1} w={9} c="#ccff66" />}
          </g>
        );
      })}
      <path d="M63 887H238V891H63zM405 887H557V891H405zM806 887H892V891H806zM972 887H983V891H972z" fill="#ccff66" />
      <path d="M4 892.500H1510" stroke="#fff" strokeWidth="3" />
      <polygon points={`5,892 ${base} 1509,892`} fill="#ccff66" />
      <polyline points={base} stroke="#ff6600" strokeWidth="2" fill="none" />
      <polyline points={retail.map((r, i) => `${barX(i).toFixed(1)},${V(r).toFixed(1)}`).join(" ")} fill="none" stroke={C.cyan} strokeWidth="3" />
      <polyline points={retail.map((r, i) => `${barX(i).toFixed(1)},${V(99.3 - r).toFixed(1)}`).join(" ")} fill="none" stroke={C.magenta} strokeWidth="3" />
      <path d="M1415 783l2-1 1 5 6 2 1 5-3 4h-5l-4-6 3 1z" fill="#ffd890" stroke="#402000" strokeWidth=".8" shapeRendering="auto" />
    </Plot>
  );
};
const DateAxis = () => (
  <DatePlot viewBox="0 955 1563 15" preserveAspectRatio="none">
    <text x="4" y="967" fill={C.red} fontSize="12" fontWeight="700" fontFamily={FONT}>2025年</text>
    {months.map(([x, t]) => (
      <g key={t}>
        <path d={`M${x - 1}.5 955V970`} stroke={C.line} />
        <text x={x + 1} y="967" fill={C.red} fontSize="12" fontWeight="700" fontFamily={FONT}>{t}</text>
      </g>
    ))}
    {[145, 209, 274, 414, 490, 566, 729, 817, 904, 1067, 1143, 1220, 1348, 1401, 1454].map((x) => (
      <path key={x} d={`M${x}.5 955V957`} stroke={C.line} />
    ))}
  </DatePlot>
);
const AxisLabels = ({ rows, step, x }: { rows: [number, string][]; step: number; x: number }) => (
  <>
    {rows.map(([y, t]) => (
      <g key={t}>
        <path d={`M${x} ${Math.round(y)}.5h5M${x} ${Math.round(y + step)}.5h2`} stroke={C.line} />
        <text x="1608" y={y + 4} fill={C.red} fontSize="12" fontWeight="700" textAnchor="end" fontFamily={FONT}>{t}</text>
      </g>
    ))}
  </>
);
const priceRows: [number, string][] = [[245, "16.00"], [274, "15.50"], [303, "15.00"], [332, "14.50"], [361, "14.00"], [390, "13.50"], [418, "13.00"], [447, "12.50"]];
const valueRows: [number, string][] = [[530, "140.0"], [582, "120.0"], [633, "100.0"], [685, "80.00"], [737, "60.00"], [788, "40.00"], [840, "20.00"], [892, "0.00"]];

const LegendItems = ({ items }: { items: Leg[] }) => (
  <>
    {items.map(([k, v, c, dir]) => (
      <LegendItem key={k} $c={c}>
        <LegendKey $latin={/^[\x00-\x7f]+$/.test(k)}>{k}</LegendKey>
        {v}
        {dir && <Arrow dir={dir} />}
      </LegendItem>
    ))}
  </>
);

const Box = ({ children, c = "#3878e0" }: { children?: React.ReactNode; c?: string }) => (
  <svg width="17" height="16" viewBox="0 0 17 16" aria-hidden>
    <rect x=".5" y=".5" width="15" height="14" fill="#fff" stroke={c} />
    {children}
  </svg>
);
const BoxText = ({ t }: { t: string }) => (
  <Box><text x="8" y="11" textAnchor="middle" fontSize={t.length > 2 ? 8 : 10} fill="#1040a0" fontFamily={FONT}>{t}</text></Box>
);
const arrowBox = (d: string) => (
  <svg width="18" height="18" viewBox="0 0 18 18" aria-hidden><path d={d} fill="#fff" stroke="#3878e0" /></svg>
);
const stripIcons: [string, React.ReactNode][] = [
  ["后退", arrowBox("M1.500 9l6-6v3.500h8v5h-8V15z")],
  ["上翻", arrowBox("M9 1.500l6 6h-3.500v8h-5v-8H3z")],
  ["下翻", arrowBox("M9 16.500l6-6h-3.500v-8h-5v8H3z")],
  ["自选股", <Box><path d="M2 3.500h5M2 6.500h5M2 9.500h5" stroke="#008000" /><path d="M8 3.500h6M8 6.500h6" stroke="#e00000" /><circle cx="11" cy="10.500" r="3" fill="#ddd" stroke="#666" /></Box>],
  ["行情列表", <Box><path d="M2 3.500h3M2 6.500h3M2 9.500h3M2 12h3" stroke="#e00000" /><path d="M7 3.500h3M7 6.500h3M7 9.500h3M7 12h3" stroke="#008000" /><path d="M11.500 3.500h3M11.500 6.500h3M11.500 9.500h3M11.500 12h3" stroke="#0000e0" /></Box>],
  ["走势", <Box><path d="M2 11l4-3 2 2 6-6" stroke="#e00000" fill="none" /></Box>],
  ["K线", <Box><path d="M2 6h3v5H2zM3.500 4v9M11 3h3v6h-3zM12.500 1v10" fill="#e00000" stroke="#e00000" strokeWidth=".6" /><path d="M6.500 6h3v5h-3zM8 4v9" fill="#008000" stroke="#008000" strokeWidth=".6" /></Box>],
  ["资讯", <svg width="17" height="16" viewBox="0 0 17 16" aria-hidden><path d="M4 3V1h12v10h-2" fill="none" stroke="#3878e0" /><path d="M1 3.500h12v11H1z" fill="#fff" stroke="#3878e0" /><path d="M3 6.500h8M3 9h8M3 11.500h8" stroke="#3060a0" /></svg>],
  ["基本资料", <BoxText t="F10" />],
  ["板块", <Box><path d="M3 3h4v3H3zM9 6h4v3H9zM9 11h4v2H9z" fill="#ffd040" stroke="#d09000" strokeWidth=".5" /><path d="M5 6v6h4M5 8h4" stroke="#666" fill="none" strokeWidth=".7" /></Box>],
  ["自定义", <Box><path d="M4 4h8v9H4zM4 7h8M4 10h8M8 2v2" stroke="#ff7030" fill="none" strokeWidth="1.500" /></Box>],
  ["委托", <BoxText t="F12" />],
  ["公式", <Box c="#108080"><text x="8" y="11" textAnchor="middle" fontSize="9" fontStyle="italic" fill="#1040a0" fontFamily={FONT}>f(x)</text></Box>],
  ["圆", <Box><circle cx="8" cy="7.500" r="3.500" fill="none" stroke="#1060c0" /></Box>],
  ["-", null],
  ["叠加", <Box><path d="M2 7l3-3 3 2 3-2 3-2" stroke="#e00000" fill="none" strokeDasharray="2 1" /><path d="M2 12l3-3 3 2 3-2 3-2" stroke="#0030e0" fill="none" strokeDasharray="2 1" /></Box>],
  ["RSI", <svg width="20" height="14" viewBox="0 0 20 14"><text x="10" y="11" textAnchor="middle" fontSize="10" fontWeight="700" fill="#2050d8" fontFamily={FONT}>RSI</text></svg>],
  ["资金", <svg width="16" height="18" viewBox="0 0 16 18"><path d="M3 13c4 3 9 1 8-2-1-3-8-2-7-5 1-2 5-2 6 0M8 1l3 3H5z" stroke="#d02020" strokeWidth="2.200" fill="none" /></svg>],
  ["移动", <svg width="16" height="16" viewBox="0 0 16 16"><path d="M8 0l3 4H9v3h3V5l4 3-4 3V9H9v3h2l-3 4-3-4h2V9H4v2L0 8l4-3v2h3V4H5z" fill="#1058b8" /></svg>],
  ["画笔", <svg width="16" height="16" viewBox="0 0 16 16"><path d="M2 14l1-4 8-8 3 3-8 8z" fill="#f0a030" stroke="#a05010" strokeWidth=".7" /><path d="M10 3l3 3 1.500-1.500-3-3z" fill="#e04040" /><path d="M2 14l.5-2 1.500 1.500z" fill="#222" /></svg>],
  ["-", null],
  ["F5", <BoxText t="F5" />],
  ["刷新", <Box><path d="M4 7a4 4 0 0 1 7-2M12 8a4 4 0 0 1-7 2" stroke="#40a040" strokeWidth="2.200" fill="none" /></Box>],
];
const stripPeriods = ["1", "5", "15", "30", "60", "日", "周", "月", "N", "多", "季", "年"];

const toolIcons: [string, React.ReactNode][] = [
  ["消息", <g><path d="M2 13l1-3a5.500 5.500 0 1 1 3 2.500z" /><path d="M5 6.500h1.500M8.500 6.500H10M5.500 9h4" strokeWidth="1.300" /></g>],
  ["设置", <path d="M1 4.500h12M1 10h12M4.500 2.500v4M9.500 8v4" />],
  ["公式", <path d="M9 1.500c-3-1-3.500 2-4 5S4.500 12 2 12M3 5.500h6M7 7.500l6 5M13 6l-6 7" />],
  ["屏幕", <path d="M2 2h10v7.500H2zM4 12.500h6" />],
  ["皮肤", null],
  ["最小化", <path d="M4 12h6" />],
  ["还原", <path d="M8.500 1v5H13M5.500 13V8H1" />],
  ["关闭", <path d="M2.500 2l9 10M11.500 2l-9 10" />],
];

const FactRows = ({ rows }: { rows: string[][] }) => (
  <tbody>
    {rows.map((f) => (
      <tr key={f[0]}>
        <Key $w={52}>{f[0]}</Key>
        <Cell $w={85} $c={f[2]}>{f[1]}</Cell>
        <Key $w={56}><Shift>{f[3]}</Shift></Key>
        <Cell $w={84} $c={f[5]}>{f[4]}</Cell>
      </tr>
    ))}
  </tbody>
);
const BookRows = ({ rows }: { rows: string[][] }) => (
  <tbody>
    {rows.map((r) => (
      <tr key={r[0]}>
        <Key $w={52}>{r[0]}</Key>
        <Cell $w={85} $c={C.green}>{r[1]}</Cell>
        <Cell $w={140} $c={C.olive}>{r[2]}</Cell>
      </tr>
    ))}
  </tbody>
);

export default function App() {
  return (
    <Page>
      <Global />
      <Header>
        <Brand><Logo />国盛睿</Brand>
        <Nav>
          {nav.map(([t, w]) => <NavLink key={t} href="#" $w={w} $on={t === "交易"}>{t}</NavLink>)}
        </Nav>
        <Tools>
          {toolIcons.map(([t, icon]) => (
            <Tool key={t} aria-label={t}>
              {icon ? (
                <svg width="14" height="14" viewBox="0 0 14 14" fill="none" stroke="currentColor" strokeWidth="1.800">{icon}</svg>
              ) : (
                <Shirt size={15} strokeWidth={2.5} />
              )}
            </Tool>
          ))}
        </Tools>
      </Header>
      <Body>
        <Left>
          <Workspace>
            <Charts>
              <Toolbar>
                <PanelToggle aria-label="侧栏"><PanelIcon /></PanelToggle>
                <Periods>{periods.map((p) => <Period key={p} $on={p === "日线"}>{p}</Period>)}</Periods>
                {toolTabs.map((t) => <ToolTab key={t}>{t}</ToolTab>)}
              </Toolbar>
              <Pane $grow={412}>
                <PaneMain>
                  <Legend>
                    <LegendName $c={C.aqua}>城地香江<LegendName $c={C.grey}>(日线.等比前复权)</LegendName></LegendName>
                    <IconButton aria-label="指标菜单"><Drop /></IconButton>
                    <LegendName $c={C.grey}>飞碟妖龙</LegendName>
                    <LegendItems items={mainLegend} />
                    <Push />
                    <IconButton aria-label="标记"><svg width="12" height="12" viewBox="0 0 12 12"><path d="M6 1l5 5-5 5-5-5z" fill="none" stroke="#606060" /></svg></IconButton>
                    <IconButton aria-label="分栏"><PanelIcon /></IconButton>
                  </Legend>
                  <Canvas>
                    <MainPlot />
                    <Info>
                      <InfoKey>行业:</InfoKey><span>软件服务</span>
                      <InfoKey>概念:</InfoKey><span>阿里概念 腾讯概念 云计算 边缘计算 数据中心 PPP概念 抖音概念 东数西算 算力租赁 液冷服务器</span>
                      <InfoKey>地区:</InfoKey><span>上海板块<Unlock>解禁日期:</Unlock></span>
                      <InfoKey>风格:</InfoKey><span>融资融券 个人持股 微利股 连续亏损 沪股通标的 昨曾涨停 昨日较强 昨日振荡</span>
                    </Info>
                    <Score>
                      <ScoreRow $c={C.yellow} $top>机构量化评分系统</ScoreRow>
                      <ScoreRow $c={C.pure}><span>机构评分:</span><b>40.00</b></ScoreRow>
                      <ScoreRow $c={C.cyan}><span>今日阻力:</span><b>16.88</b></ScoreRow>
                      <ScoreRow $c="#ff8080"><span>今日支撑:</span><b>16.07</b></ScoreRow>
                      <ScoreRow $c="#fff">制胜巅峰</ScoreRow>
                    </Score>
                  </Canvas>
                </PaneMain>
                <AxisCol>
                  <AxisBlank />
                  <AxisQuotes>
                    <AxisQuote $c={C.grey}>16.36</AxisQuote>
                    <AxisQuote $c={C.olive}>400</AxisQuote>
                    <AxisQuote $c={C.grey} $gap={2}>16.35</AxisQuote>
                    <AxisQuote $c={C.olive}>848</AxisQuote>
                    <AxisQuote $c={C.green} $gap={8}>16.35</AxisQuote>
                    <AxisQuote $c={C.green}>▼-0.62</AxisQuote>
                    <AxisQuote $c={C.green}>-3.65%</AxisQuote>
                    <AxisQuote $c={C.grey}>6088</AxisQuote>
                  </AxisQuotes>
                  <AxisPlot viewBox="1564 231 50 233" preserveAspectRatio="none">
                    <AxisLabels rows={priceRows} step={14} x={1564} />
                  </AxisPlot>
                </AxisCol>
              </Pane>
              <Pane $grow={490} $ruled>
                <PaneMain>
                  <Legend>
                    <IconButton aria-label="副图菜单"><Drop /></IconButton>
                    <LegendName $c={C.grey}>主控盘</LegendName>
                    <LegendItems items={subLegend} />
                  </Legend>
                  <Canvas><ControlPlot /></Canvas>
                </PaneMain>
                <AxisCol $heavy>
                  <AxisPlot viewBox="1565 466 48 487" preserveAspectRatio="none">
                    <AxisLabels rows={valueRows} step={-26} x={1565} />
                  </AxisPlot>
                </AxisCol>
              </Pane>
              <DateRow><DateAxis /><DateCell>日线</DateCell></DateRow>
              <TabRow $h={17}>
                {indicatorTabs.map((t) => <Tab key={t} $c={t === "主控盘" ? C.aqua : undefined}>{t}</Tab>)}
                <Tab $w={14} aria-label="更多指标">&gt;</Tab>
                <Push />
                <Tab $w={43} $edge>指标B</Tab>
                <Tab $w={42}>模 板</Tab>
                <Tab $w={25}>＋</Tab>
                <Tab $w={25}>－</Tab>
              </TabRow>
              <TabRow $h={18}>
                <Tab>扩展∧</Tab><Tab>关联报价</Tab><Tab>资金流向</Tab><Tab $c={C.olive}>综合资讯</Tab><Tab $c={C.olive}>板块资讯</Tab>
                <Push />
                <Tab $c={C.olive} $w={49} $edge>图文F10</Tab><Tab $c={C.olive} $w={50}>侧边栏«</Tab>
              </TabRow>
              <EndRule />
            </Charts>
            <Quote>
              <Title>城地香江<Code>603887</Code><Margin><b>R</b>1000</Margin></Title>
              <PriceRow>
                <span>16.35</span>
                <span><svg width="16" height="16" viewBox="0 0 16 16" aria-hidden><path d="M1 2h14L8 15z" fill={C.green} /></svg>-0.62</span>
                <span>-3.65%</span>
              </PriceRow>
              <Grid $row={18} $rule={false}><BookRows rows={asks} /></Grid>
              <Ratio><i /><i /></Ratio>
              <Grid $row={18} $pad={1}><BookRows rows={bids} /></Grid>
              <Grid $row={19}><FactRows rows={facts} /></Grid>
              <Grid $row={19} $pad={2}><FactRows rows={facts2} /></Grid>
              <StateRow $h={20}>交易状态: 闭市阶段<Small>15:00:03</Small></StateRow>
              <StateRow $h={23}>
                主力净额&nbsp;
                <svg width="13" height="13" viewBox="0 0 13 13" aria-hidden><rect x=".5" y=".5" width="12" height="12" rx="2" fill="#202020" stroke="#707070" /><path d="M3 4h7M3 6.500h7M3 9h7" stroke="#909090" /></svg>
                <NetBar />
                <Small $c={C.green}>-1.74亿</Small><Small $c={C.green}>-23%</Small>
              </StateRow>
              <Ticks>
                <tbody>
                  {tickPrices.map((p, i) => {
                    const last = i === tickPrices.length - 1;
                    return (
                      <TickRow key={i} $start={i > 0 && i in tickTimes}>
                        <Key $w={60}>{tickTimes[i] || ""}</Key>
                        <Cell $w={77} $c={C.green}>16.{p}</Cell>
                        <Cell $w={82} $c={last ? "#c000c0" : C.olive}>{last ? "6088" : "0"}</Cell>
                        <Cell $w={58} $c="#808080" $pad={last ? 0 : 7}>{last ? "302" : "–"}</Cell>
                      </TickRow>
                    );
                  })}
                </tbody>
              </Ticks>
              <QuoteTabs>
                {["笔", "价", "细", "势", "联", "值", "主", "逆", "筹"].map((t, i) => <QuoteTab key={t} $on={i === 0}>{t}</QuoteTab>)}
              </QuoteTabs>
            </Quote>
          </Workspace>
          <Ticker>
            <TickerTail>告</TickerTail>
            {news.map((n) => <span key={n}>{n}</span>)}
          </Ticker>
          <Status>
            <Stat $w={19}><Drop bg="#5a6478" /></Stat>
            {indices.map(([t, w, c], i) => <Stat key={i} $w={w} $c={c}>{t}</Stat>)}
            <svg width="14" height="14" viewBox="0 0 14 14" aria-hidden><path d="M4 12a6 6 0 1 1 6 0M5 10l5-6" stroke="#626b7e" strokeWidth="1.800" fill="none" /></svg>
            <Badge>3</Badge>
            <Linked>已连接</Linked>
            <StatusIcons>
              <svg width="16" height="11" viewBox="0 0 16 11"><rect width="16" height="11" rx="2" fill="currentColor" /><path d="M2.500 3h11M2.500 5.500h11" stroke="#151d22" strokeDasharray="2 1.200" /><path d="M4 8.500h8" stroke="#151d22" /></svg>
              <svg width="12" height="14" viewBox="0 0 12 14"><path d="M0 5h3v7H0zM4.500 3h3v8h-3zM9 2h3v7H9zM1 3h1v11H1zM5.500 0h1v13h-1zM10 0h1v11h-1z" fill="currentColor" /></svg>
              <svg width="15" height="15" viewBox="0 0 15 15"><circle cx="7.500" cy="7.500" r="6" fill="none" stroke="currentColor" strokeWidth="2" strokeDasharray="7 2.400" /><path d="M7.500 3v3M7.500 9v3M3 7.500h3M9 7.500h3" stroke="currentColor" strokeWidth="1.500" /></svg>
              <svg width="14" height="14" viewBox="0 0 14 14"><path d="M3 5h8v6h2v3H1v-3h2zM6.500 0h1v3h-1zM1 1l2 2-1 1-2-2zM13 1l-2 2 1 1 2-2z" fill="#fff" /></svg>
            </StatusIcons>
            <Clock>19:29:02</Clock>
          </Status>
        </Left>
        <Strip>
          {stripIcons.map(([t, icon], i) => (icon ? <StripButton key={i} aria-label={t}>{icon}</StripButton> : <StripRule key={i} />))}
          {stripPeriods.map((t) => <StripButton key={t} $on={t === "日"}>{t}</StripButton>)}
        </Strip>
      </Body>
    </Page>
  );
}
